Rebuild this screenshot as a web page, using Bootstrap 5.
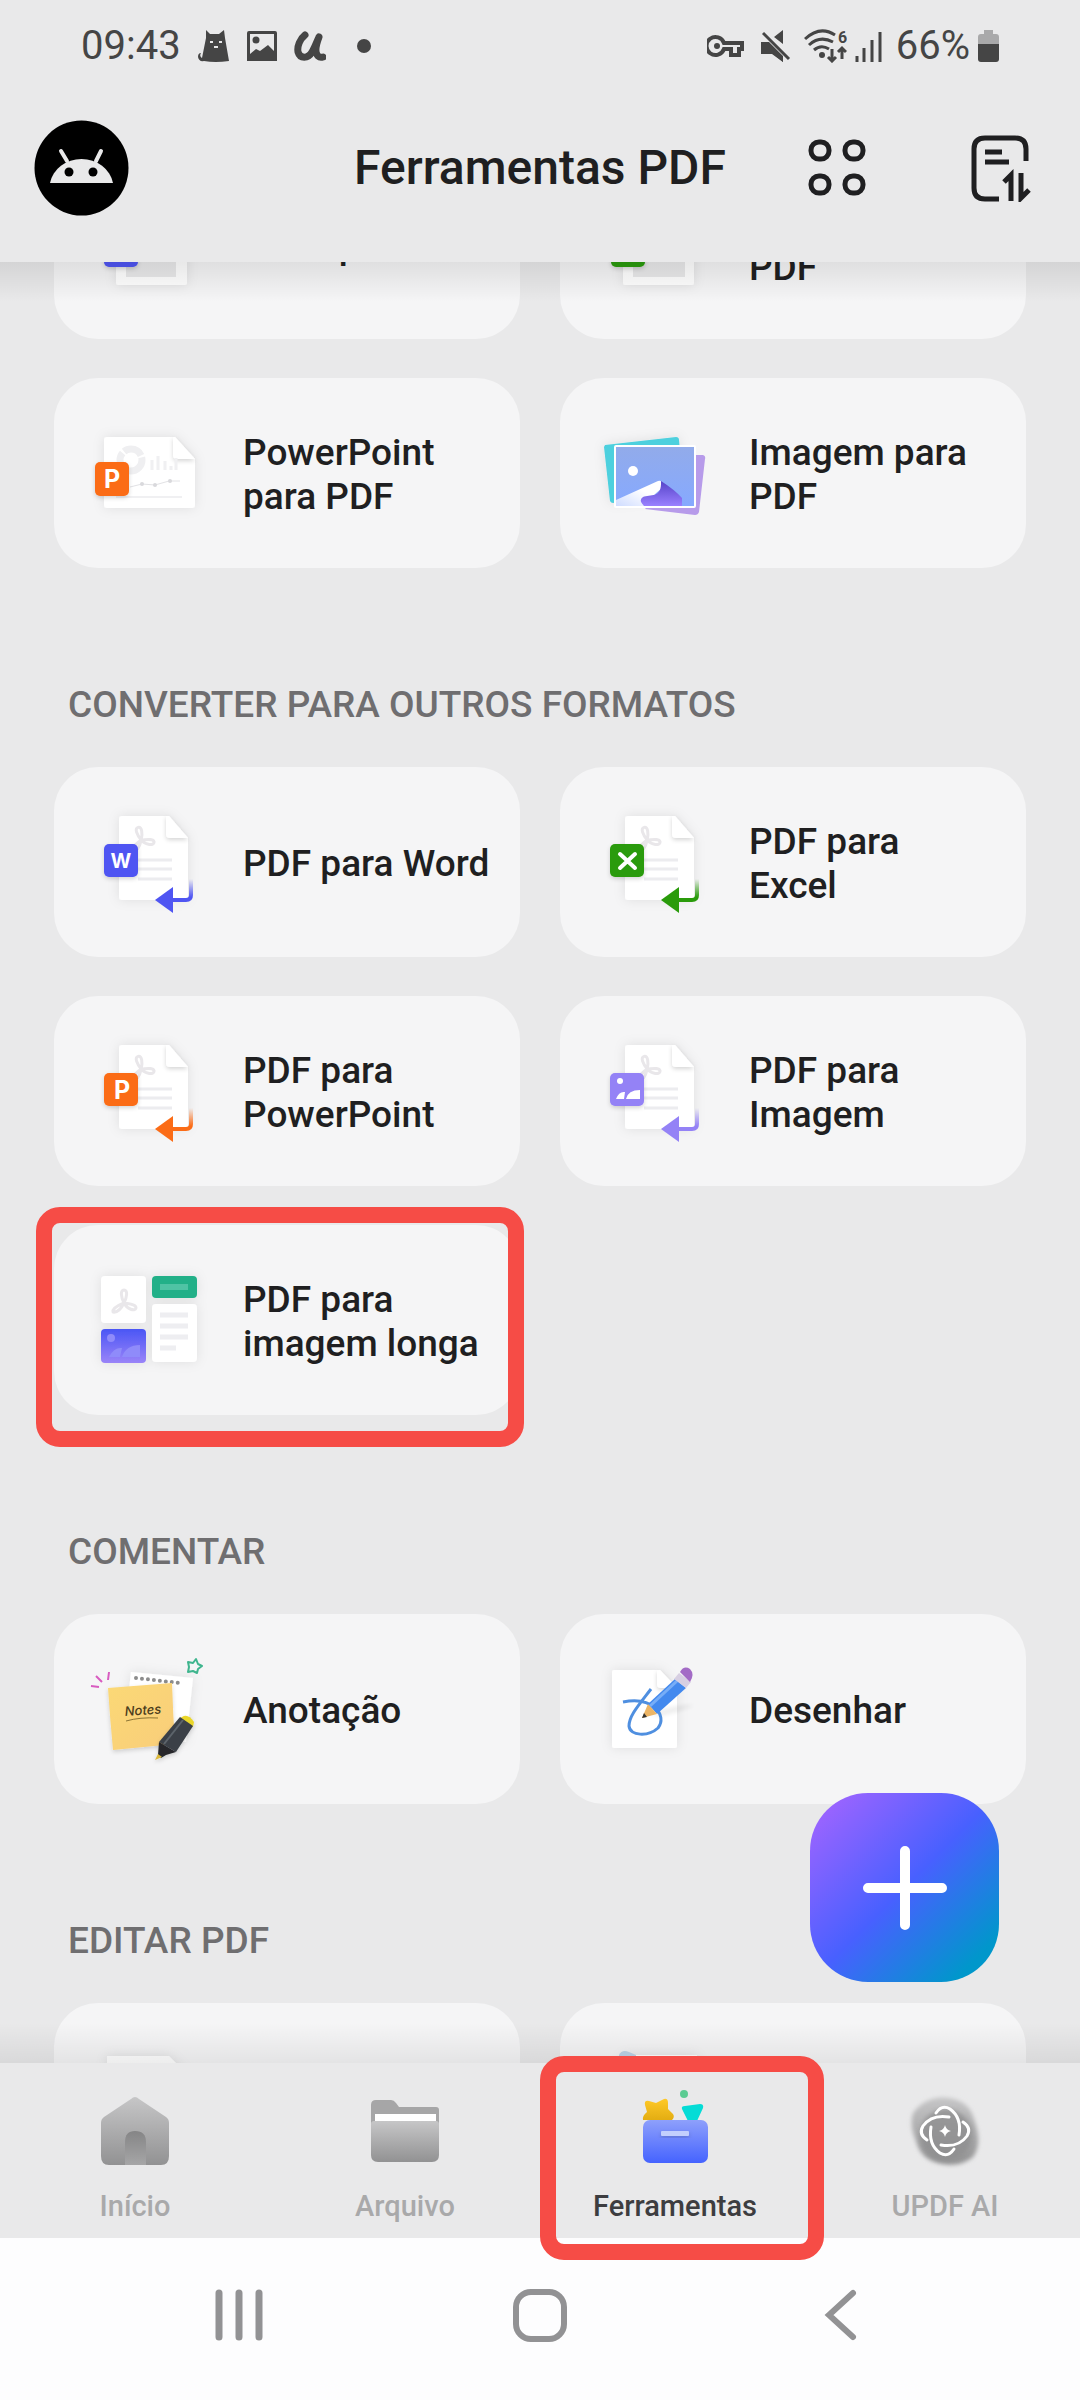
<!DOCTYPE html>
<html lang="pt">
<head>
<meta charset="utf-8">
<meta name="viewport" content="width=device-width, initial-scale=1">
<title>Ferramentas PDF</title>
<link href="https://cdn.jsdelivr.net/npm/bootstrap@5.3.0/dist/css/bootstrap.min.css" rel="stylesheet">
<style>
  :root { --page: #e9e9ea; --tile: #f5f5f6; --ink: #1f1f21; --alert: #f64c46; }
  body { font-family: Roboto, "Noto Sans", sans-serif; background: var(--page); color: var(--ink); overflow: hidden; }
  svg { display: block; flex: none; }
  a { text-decoration: none; color: inherit; }

  .status-bar { height: 92px; padding: 0 81px; font-size: 40px; line-height: 44px; color: #454545; }
  .status-left { gap: 17px; }

  .app-header { display: grid; grid-template-columns: 1fr auto 1fr; padding: 28px 49px 46px 34px; }
  .app-title { font-size: 48px; line-height: 60px; font-weight: 500; margin: 0 0 0 15px; }
  .avatar { width: 95px; height: 96px; }
  .header-actions { gap: 105px; }

  .tool-area { min-height: 0; overflow: hidden; }
  .tool-area::before, .tool-area::after { content: ""; position: absolute; left: 0; right: 0; height: 40px; z-index: 2; pointer-events: none; }
  .tool-area::before { top: 0; background: linear-gradient(rgba(0,0,0,.09), rgba(0,0,0,0)); }
  .tool-area::after { bottom: 0; background: linear-gradient(rgba(0,0,0,0), rgba(0,0,0,.07)); }
  /* the list is scrolled part of the way through its first row */
  .tool-list { margin-top: -113px; padding: 0 54px; }
  .tool-grid { display: grid; grid-template-columns: 1fr 1fr; gap: 39px 40px; }
  .tool-card { height: 190px; border: 0; border-radius: 44px; background: var(--tile); color: var(--ink); font-size: 37px; line-height: 44px; font-weight: 500; }
  .tool-card svg { width: 189px; height: 190px; }
  .group-title { font-size: 37px; line-height: 44px; font-weight: 500; color: #6f6e70; margin: 0; padding: 115px 14px 40px; }

  .callout-box { position: absolute; border: 16px solid var(--alert); border-radius: 24px; z-index: 3; pointer-events: none; }
  .callout-card { inset: -18px -4px -32px -18px; }
  .callout-tab { inset: -7px -14px -22px 0; }

  .fab { position: absolute; right: 81px; bottom: 81px; width: 189px; height: 189px; border: 0; border-radius: 58px; z-index: 3;
    background: linear-gradient(135deg, #9a64ff 8%, #4860ff 50%, #0097cb 88%); }

  .tab-bar { background: var(--page); z-index: 4; }
  .tab-link { padding: 26px 0 14px; gap: 19px; font-size: 29px; line-height: 36px; font-weight: 500; color: #a9a9aa; }
  .tab-link.active { color: #3d3d40; }
  .system-bar { height: 162px; padding: 0 88px 8px; background: #fdfdfe; }
  .system-bar .btn { flex: 1 1 0; }
</style>
<script src="https://cdn.jsdelivr.net/npm/bootstrap@5.3.0/dist/js/bootstrap.bundle.min.js"></script>
</head>
<body>

<!-- shared drawing parts -->
<svg width="0" height="0" class="position-absolute" aria-hidden="true">
  <defs>
    <filter id="soft" x="-30%" y="-30%" width="160%" height="160%"><feDropShadow dx="0" dy="0" stdDeviation="6" flood-color="#000" flood-opacity=".09"/></filter>
    <filter id="small-soft" x="-40%" y="-40%" width="180%" height="180%"><feDropShadow dx="0" dy="2" stdDeviation="2" flood-color="#000" flood-opacity=".16"/></filter>
    <filter id="blob" x="-30%" y="-30%" width="160%" height="160%"><feGaussianBlur stdDeviation="2"/></filter>
    <g id="loops" fill="none" stroke="#e9e7ea" stroke-width="3" stroke-linejoin="round">
      <path d="M0 1C-3-5-4-12 0-12C4-12 3-5 0 1C4 2 12 2 12 6C11 10 3 7 0 1C-2 5-6 11-11 10C-12 6-5 3 0 1Z"/>
    </g>
    <g id="sheet">
      <path d="M68 49H115L134 71V130Q134 133 131 133H68Q65 133 65 130V52Q65 49 68 49Z" fill="#fff" filter="url(#soft)"/>
      <path d="M112 49V67Q112 71 116 71H134L115 49Z" fill="#fff" filter="url(#small-soft)"/>
      <use href="#loops" transform="translate(87 72) rotate(-14)"/>
      <path d="M84 93H118M84 102H118M84 112H118" stroke="#ececef" stroke-width="3"/>
    </g>
    <linearGradient id="fade-m" x1="0" y1="0" x2="0" y2="1"><stop offset="0" stop-color="#000"/><stop offset=".5" stop-color="#fff"/></linearGradient>
    <mask id="tail-mask" maskUnits="userSpaceOnUse" x="95" y="108" width="50" height="42"><rect x="95" y="112" width="50" height="36" fill="url(#fade-m)"/></mask>
    <g id="arrow">
      <path d="M137 112V128Q137 133 132 133H118" fill="none" stroke="currentColor" stroke-width="4" mask="url(#tail-mask)"/>
      <path d="M101 133L119 120V146Z" fill="currentColor"/>
    </g>
    <rect id="chip" x="50" y="77" width="34" height="33" rx="5" fill="currentColor" filter="url(#small-soft)"/>
    <linearGradient id="gray" x1="0" y1="0" x2="0" y2="1"><stop offset="0" stop-color="#c6c6c7"/><stop offset="1" stop-color="#929293"/></linearGradient>
    <linearGradient id="gray-dark" x1="0" y1="0" x2="0" y2="1"><stop offset="0" stop-color="#858586"/><stop offset="1" stop-color="#a6a6a7"/></linearGradient>
    <linearGradient id="box-blue" x1="0" y1="0" x2="0" y2="1"><stop offset="0" stop-color="#8ea0fb"/><stop offset="1" stop-color="#4563ff"/></linearGradient>
    <linearGradient id="gold" x1="0" y1="0" x2="0" y2="1"><stop offset="0" stop-color="#ffc928"/><stop offset="1" stop-color="#e3ad12"/></linearGradient>
    <linearGradient id="sky" x1="0" y1="0" x2="0" y2="1"><stop offset="0" stop-color="#92abea"/><stop offset="1" stop-color="#86a9ff"/></linearGradient>
    <linearGradient id="hill" x1="0" y1="0" x2="0" y2="1"><stop offset="0" stop-color="#5644c8"/><stop offset="1" stop-color="#9a80ff"/></linearGradient>
    <linearGradient id="snow" x1="0" y1="1" x2="1" y2="0"><stop offset="0" stop-color="#cfdcff"/><stop offset=".6" stop-color="#fff"/></linearGradient>
    <linearGradient id="violet" x1="0" y1="0" x2="0" y2="1"><stop offset="0" stop-color="#4a56f5"/><stop offset="1" stop-color="#9a84f8"/></linearGradient>
    <linearGradient id="note" x1="0" y1="0" x2="1" y2="1"><stop offset="0" stop-color="#fbd976"/><stop offset="1" stop-color="#f9cd7a"/></linearGradient>
  </defs>
</svg>

<div class="vh-100 d-flex flex-column">

  <div class="status-bar flex-shrink-0 d-flex align-items-center justify-content-between">
    <div class="status-left d-flex align-items-center">
      <span>09:43</span>
      <svg width="32" height="34" viewBox="0 0 32 34" fill="#454545"><path d="M8 1L12 5H21L26 1L27 9L31 32Q17 34 6 32Q1 33 0 28Q0 24 3 24Q1 27 4 29L8 9Z"/><path d="M12 13h3M21 13h3M16 18h4" stroke="#e9e9ea" stroke-width="2"/></svg>
      <svg width="30" height="34" viewBox="0 0 30 34" fill="#454545"><path fill-rule="evenodd" d="M2 2H28Q30 2 30 4V32H0V4Q0 2 2 2ZM3 5V25L9 20L13 22L21 16L27 22V5Z"/><circle cx="9" cy="11" r="3.500"/></svg>
      <svg width="32" height="34" viewBox="0 0 32 34" fill="none" stroke="#454545" stroke-width="7" stroke-linecap="round" stroke-linejoin="round"><path d="M11 6C6 10 3 17 4 23C6 30 14 30 18 23C21 18 23 12 25 8C22 16 20 23 24 27Q26 29 29 28"/></svg>
      <svg width="42" height="34" viewBox="0 0 42 34"><circle cx="21" cy="17" r="7" fill="#454545"/></svg>
    </div>
    <div class="d-flex align-items-center gap-2">
      <svg width="46" height="34" viewBox="0 0 46 34" fill="none" stroke="#454545" stroke-width="4"><path d="M17 14A9 9 0 1 0 17 20H24V26H32V20H35V14Z"/><circle cx="10" cy="17" r="3" fill="#454545" stroke="none"/></svg>
      <svg width="35" height="34" viewBox="0 0 35 34" fill="#454545"><path d="M0 13H6L22 29V33L12 25H0ZM13 8L22 1V15Z"/><path d="M0 13H8L22 27V33L11 25H0Z"/><path d="M2 4L28 30" stroke="#454545" stroke-width="3"/></svg>
      <svg width="43" height="34" viewBox="0 0 43 34" fill="none" stroke="#454545" stroke-width="3"><path d="M1 10Q16-4 31 6M5 16Q16 6 29 13M10 21Q17 15 25 20"/><circle cx="18" cy="26" r="3" fill="#454545" stroke="none"/><path d="M28 20V32M24 28L28 32L32 28M38 30V19M34 23L38 19L42 23" stroke-width="3"/><text x="34" y="14" font-size="16" font-weight="700" fill="#454545" stroke="none">6</text></svg>
      <svg width="33" height="34" viewBox="0 0 33 34" stroke="#454545" stroke-width="3"><path d="M2 27V33M9 19V33M17 11V33M25 3V33"/></svg>
      <span>66%</span>
      <svg width="21" height="34" viewBox="0 0 21 34"><path d="M6 1H15V5H18Q21 5 21 8V15H0V8Q0 5 3 5H6Z" fill="#a9a9aa"/><path d="M0 15H21V30Q21 33 18 33H3Q0 33 0 30Z" fill="#454545"/></svg>
    </div>
  </div>

  <header class="app-header flex-shrink-0 align-items-center">
    <a href="#" class="avatar" aria-label="Conta">
      <svg width="95" height="96" viewBox="0 0 95 96"><ellipse cx="47.500" cy="48" rx="47" ry="47.500"/><path d="M16 63A32 29 0 0 1 79 63Z" fill="#e9e9ea"/><path d="M27 31L33 41M67 31L62 41" stroke="#e9e9ea" stroke-width="4" stroke-linecap="round"/><circle cx="35" cy="52" r="4.500"/><circle cx="59" cy="52" r="4.500"/></svg>
    </a>
    <h1 class="app-title">Ferramentas PDF</h1>
    <div class="header-actions d-flex align-items-center justify-content-end">
      <button type="button" class="btn p-0 border-0" aria-label="Modo de grade">
        <svg width="58" height="68" viewBox="0 0 58 68" fill="none" stroke="#1f1f21" stroke-width="5"><rect x="3" y="8" width="18" height="17" rx="8"/><rect x="37" y="8" width="18" height="17" rx="8"/><rect x="3" y="42" width="18" height="17" rx="8"/><rect x="37" y="42" width="18" height="17" rx="8"/></svg>
      </button>
      <button type="button" class="btn p-0 border-0" aria-label="Ordenar">
        <svg width="60" height="68" viewBox="0 0 60 68" fill="none" stroke="#1f1f21" stroke-width="5"><path d="M55 27V15Q55 4 44 4H14Q3 4 3 15V54Q3 65 14 65H28M14 18H31M14 28H38M40 67V41L33 48M50 39V64L58 56"/></svg>
      </button>
    </div>
  </header>

  <main class="tool-area flex-grow-1 position-relative">
    <div class="tool-list">

      <div class="tool-grid">
        <a href="#" class="card tool-card flex-row align-items-center">
          <svg viewBox="0 0 189 190"><rect x="62" y="52" width="71" height="84" rx="2" fill="#fff" filter="url(#soft)"/><rect x="72" y="62" width="50" height="66" fill="#e9e9ea"/><rect x="50" y="84" width="34" height="34" rx="5" fill="#4f55f2" filter="url(#small-soft)"/></svg>
          <span class="pt-1">Word para PDF</span>
        </a>
        <a href="#" class="card tool-card flex-row align-items-center">
          <svg viewBox="0 0 189 190"><rect x="63" y="52" width="71" height="84" rx="2" fill="#fff" filter="url(#soft)"/><rect x="73" y="62" width="52" height="66" fill="#e9e9ea"/><rect x="51" y="84" width="34" height="34" rx="5" fill="#2a9b0b" filter="url(#small-soft)"/></svg>
          <span class="pt-1">Excel para<br>PDF</span>
        </a>
        <a href="#" class="card tool-card flex-row align-items-center">
          <svg viewBox="0 0 189 190">
            <path d="M53 59H121L141 81V127Q141 130 138 130H53Q50 130 50 127V62Q50 59 53 59Z" fill="#fff" filter="url(#soft)"/>
            <path d="M119 59V77Q119 81 123 81H141L121 59Z" fill="#fff" filter="url(#small-soft)"/>
            <circle cx="77" cy="82" r="11" fill="none" stroke="#efeff1" stroke-width="7" stroke-dasharray="20 2"/>
            <path d="M98 92V82M104 92V78M111 92V83M117 92V88M122 92V80" stroke="#f0f0f2" stroke-width="3"/>
            <path d="M76 109L88 106L101 107L115 103H126" fill="none" stroke="#e2e2e5" stroke-width="1"/><circle cx="88" cy="106" r="2" fill="#d9d9dc"/><circle cx="101" cy="107" r="2" fill="#d9d9dc"/><circle cx="116" cy="103" r="2" fill="#d9d9dc"/>
            <path d="M62 119H128" stroke="#f0f0f2" stroke-width="2"/>
            <rect x="41" y="84" width="34" height="34" rx="5" fill="#fb6c17" filter="url(#small-soft)"/>
            <text x="58" y="110" text-anchor="middle" font-family="Inter, sans-serif" font-size="25" font-weight="700" fill="#fff">P</text>
          </svg>
          <span class="pt-1">PowerPoint<br>para PDF</span>
        </a>
        <a href="#" class="card tool-card flex-row align-items-center">
          <svg viewBox="0 0 189 190">
            <path d="M45 67L116 59Q119 59 119 62L124 117L53 125Q51 125 50 123L44 69Z" fill="#4dd0de" filter="url(#soft)"/>
            <path d="M136 77L143 77Q146 78 145 81L139 134Q138 137 135 137L85 131Z" fill="#b79bea"/>
            <rect x="55" y="68" width="80" height="61" rx="1" fill="url(#sky)" stroke="#fff" stroke-width="2"/>
            <circle cx="73" cy="93" r="5" fill="#fff"/>
            <path d="M56 122L98 103Q103 101 102 110Q90 120 84 128H56Z" fill="url(#snow)"/>
            <path d="M101 103Q115 112 122 120L122 128H84Q78 122 83 119C90 116 102 121 101 103Z" fill="url(#hill)"/>
          </svg>
          <span class="pt-1">Imagem para<br>PDF</span>
        </a>
      </div>

      <h2 class="group-title">CONVERTER PARA OUTROS FORMATOS</h2>
      <div class="tool-grid">
        <a href="#" class="card tool-card flex-row align-items-center">
          <svg viewBox="0 0 189 190" color="#4f55f2"><use href="#sheet"/><use href="#chip"/><use href="#arrow"/><text x="67" y="101" text-anchor="middle" font-family="Inter, sans-serif" font-size="20" font-weight="700" fill="#fff">W</text></svg>
          <span class="pt-1">PDF para Word</span>
        </a>
        <a href="#" class="card tool-card flex-row align-items-center">
          <svg viewBox="0 0 189 190" color="#2a9b0b"><use href="#sheet"/><use href="#chip"/><use href="#arrow"/><path d="M60 87L75 101M75 87L60 101" stroke="#fff" stroke-width="4" stroke-linecap="round"/></svg>
          <span class="pt-1">PDF para<br>Excel</span>
        </a>
        <a href="#" class="card tool-card flex-row align-items-center">
          <svg viewBox="0 0 189 190" color="#fb6c17"><use href="#sheet"/><use href="#chip"/><use href="#arrow"/><text x="68" y="103" text-anchor="middle" font-family="Inter, sans-serif" font-size="25" font-weight="700" fill="#fff">P</text></svg>
          <span class="pt-1">PDF para<br>PowerPoint</span>
        </a>
        <a href="#" class="card tool-card flex-row align-items-center">
          <svg viewBox="0 0 189 190" color="#9482f6"><use href="#sheet"/><use href="#chip"/><use href="#arrow"/><circle cx="60" cy="85" r="3" fill="#fff"/><path d="M56 103Q59 95 65 96L64 103ZM66 103Q68 94 80 94V103Z" fill="#fff"/></svg>
          <span class="pt-1">PDF para<br>Imagem</span>
        </a>
        <div class="position-relative">
          <a href="#" class="card tool-card flex-row align-items-center">
            <svg viewBox="0 0 189 190">
              <g filter="url(#soft)"><rect x="47" y="51" width="45" height="47" rx="4" fill="#fff"/><rect x="98" y="79" width="45" height="58" rx="4" fill="#fff"/><rect x="98" y="51" width="45" height="22" rx="4" fill="#22b088"/><rect x="47" y="104" width="45" height="34" rx="4" fill="url(#violet)"/></g>
              <use href="#loops" x="70" y="77"/>
              <path d="M106 62H134" stroke="#4fc3a4" stroke-width="6"/>
              <path d="M106 90H134M106 101H134M106 112H134M106 123H122" stroke="#eeeef1" stroke-width="5"/>
              <g fill="#8f8bfa"><circle cx="57" cy="113" r="4"/><path d="M55 132Q60 122 68 123L66 132ZM68 132Q72 120 86 120V132Z"/></g>
            </svg>
            <span class="pt-1">PDF para<br>imagem longa</span>
          </a>
          <div class="callout-box callout-card"></div>
        </div>
      </div>

      <h2 class="group-title">COMENTAR</h2>
      <div class="tool-grid">
        <a href="#" class="card tool-card flex-row align-items-center">
          <svg viewBox="0 0 189 190">
            <path d="M77 58L139 64L132 128L70 122Z" fill="#fff" filter="url(#soft)"/>
            <path d="M82 64L126 69" stroke="#8c8c8c" stroke-width="4" stroke-linecap="round" stroke-dasharray="0 6"/>
            <path d="M54 74L118 69Q119 100 121 130L59 136Q56 105 54 74Z" fill="url(#note)" filter="url(#small-soft)"/>
            <text x="71" y="102" transform="rotate(-4 71 102)" font-family="Inter, sans-serif" font-size="13" font-style="italic" fill="#4a3c1c">Notes</text>
            <path d="M72 107Q86 103 104 104" fill="none" stroke="#8c7434" stroke-width="1"/>
            <path d="M37 72L45 73M42 62L48 68M55 58L54 66" stroke="#d85cc0" stroke-width="2"/>
            <path d="M142 45L144 50L148 52L144 55L143 59L139 57L134 58L135 53L134 48L139 49Z" fill="none" stroke="#3fb58e" stroke-width="2" stroke-linejoin="round"/>
            <g filter="url(#small-soft)"><path d="M128 103Q134 99 140 108L139 113L125 105Z" fill="#ead62b"/><path d="M126 103L139 112L122 138L105 128Z" fill="#3b4046"/><path d="M105 128L122 138L112 141L107 144L104 141Z" fill="#25282c"/><path d="M104 140L108 143L101 146Z" fill="#dcb93a"/></g>
            <path d="M129 106L110 130" stroke="#5d646b" stroke-width="2"/>
          </svg>
          <span class="pt-1">Anotação</span>
        </a>
        <a href="#" class="card tool-card flex-row align-items-center">
          <svg viewBox="0 0 189 190">
            <path d="M54 56H100L117 74V132Q117 134 115 134H54Q52 134 52 132V58Q52 56 54 56Z" fill="#fff" filter="url(#soft)"/>
            <path d="M97 57V70Q97 74 101 74H117L100 56Z" fill="#fff" filter="url(#small-soft)"/>
            <path d="M90 101Q112 90 134 91Q120 98 100 102Z" fill="#000" opacity=".07" filter="url(#blob)"/>
            <path d="M91 75C78 92 69 102 69 112C70 122 88 123 98 114C108 101 92 82 63 88" fill="none" stroke="#4f8fe0" stroke-width="3"/>
            <path d="M115 65L126 74L97 100L88 90Z" fill="#4389ee"/><path d="M117 67L90 92" stroke="#77adf7" stroke-width="3"/>
            <path d="M88 90L97 100L82 104Z" fill="#edb565"/><path d="M84 99L87 103L82 104Z" fill="#333"/>
            <path d="M119 59L131 68L126 74L114 65Z" fill="#d7cfe2"/><path d="M120 58Q124 51 130 55Q135 60 130 68Z" fill="#a36bc6"/>
          </svg>
          <span class="pt-1">Desenhar</span>
        </a>
      </div>

      <h2 class="group-title">EDITAR PDF</h2>
      <div class="tool-grid">
        <a href="#" class="card tool-card flex-row align-items-center" aria-label="Editar">
          <svg viewBox="0 0 189 190"><path d="M53 53H115L132 70V136H53Z" fill="#fff" filter="url(#soft)"/></svg>
        </a>
        <a href="#" class="card tool-card flex-row align-items-center" aria-label="Organizar">
          <svg viewBox="0 0 189 190"><rect x="62" y="52" width="75" height="84" fill="#fff" filter="url(#soft)"/><path d="M59 52Q62 46 69 49L76 52V60H59Z" fill="#bcd2e6"/></svg>
        </a>
      </div>
    </div>

    <button type="button" class="fab d-flex align-items-center justify-content-center p-0" aria-label="Adicionar">
      <svg width="86" height="86" viewBox="0 0 86 86"><path d="M43 6V80M6 43H80" stroke="#fff" stroke-width="10" stroke-linecap="round"/></svg>
    </button>
  </main>

  <nav class="tab-bar flex-shrink-0 position-relative d-flex">
    <a href="#" class="tab-link d-flex flex-column align-items-center col-3">
      <svg width="100" height="80" viewBox="0 0 100 80"><path d="M46 10Q50 6 54 10L81 28Q84 30 84 34V67Q84 76 76 76H24Q16 76 16 67V34Q16 30 19 28Z" fill="url(#gray)"/><path d="M40 76V53Q40 42 50 42Q61 42 61 53V76Z" fill="url(#gray-dark)"/></svg>
      <span>Início</span>
    </a>
    <a href="#" class="tab-link d-flex flex-column align-items-center col-3">
      <svg width="100" height="80" viewBox="0 0 100 80"><path d="M16 16Q16 11 21 11H36Q39 11 41 14L44 18H81Q84 18 84 21V40H16Z" fill="#a6a6a7"/><path d="M20 25H81V40H20Z" fill="#fff"/><path d="M16 35Q16 32 19 32H81Q84 32 84 35V66Q84 73 77 73H23Q16 73 16 66Z" fill="url(#gray)"/></svg>
      <span>Arquivo</span>
    </a>
    <a href="#" class="tab-link active position-relative d-flex flex-column align-items-center col-3" aria-current="page">
      <svg width="100" height="80" viewBox="0 0 100 80"><path d="M20 16Q19 11 24 12L31 14L39 10Q43 9 43 14V20L48 25Q50 28 47 31H18Q17 27 22 23Z" fill="url(#gold)"/><path d="M57 20Q56 17 60 17L75 15Q79 15 78 19L72 32H63Z" fill="#05dcd6"/><circle cx="59" cy="5" r="4" fill="#5ccb92"/><rect x="18" y="31" width="65" height="43" rx="7" fill="url(#box-blue)"/><rect x="36" y="42" width="28" height="5" rx="1" fill="#c3cffd" filter="url(#small-soft)"/></svg>
      <span>Ferramentas</span>
      <div class="callout-box callout-tab"></div>
    </a>
    <a href="#" class="tab-link d-flex flex-column align-items-center col-3">
      <svg width="100" height="80" viewBox="0 0 100 80"><path d="M18 24Q32 6 54 9Q74 12 79 30Q88 54 78 68Q66 78 48 75Q26 72 21 52Q14 36 18 24Z" fill="url(#gray)" filter="url(#blob)"/><circle cx="51" cy="46" r="26" fill="#8f8f90" opacity=".8" filter="url(#blob)"/><g transform="translate(50 42)" fill="none" stroke="#fff" stroke-width="3" stroke-linecap="round"><path id="lobe" d="M-9-18C-5-24 0-25 5-22C12-17 16-8 14 4"/><use href="#lobe" transform="rotate(90)"/><use href="#lobe" transform="rotate(180)"/><use href="#lobe" transform="rotate(270)"/><path d="M0-6Q1-1 6 0Q1 1 0 6Q-1 1-6 0Q-1-1 0-6Z" fill="#fff" stroke="none"/></g></svg>
      <span>UPDF AI</span>
    </a>
  </nav>

  <div class="system-bar flex-shrink-0 d-flex align-items-center">
    <button type="button" class="btn p-0 border-0 d-flex justify-content-center" aria-label="Recentes"><svg width="54" height="56" viewBox="0 0 54 56" stroke="#929294" stroke-width="7" stroke-linecap="round"><path d="M7 6V50M27 6V50M47 6V50"/></svg></button>
    <button type="button" class="btn p-0 border-0 d-flex justify-content-center" aria-label="Tela inicial"><svg width="54" height="56" viewBox="0 0 54 56" fill="none" stroke="#929294" stroke-width="6"><rect x="3" y="5" width="48" height="47" rx="15"/></svg></button>
    <button type="button" class="btn p-0 border-0 d-flex justify-content-center" aria-label="Voltar"><svg width="54" height="56" viewBox="0 0 54 56" fill="none" stroke="#929294" stroke-width="6" stroke-linecap="round"><path d="M39 6L15 28L39 50"/></svg></button>
  </div>
</div>
</body>
</html>
